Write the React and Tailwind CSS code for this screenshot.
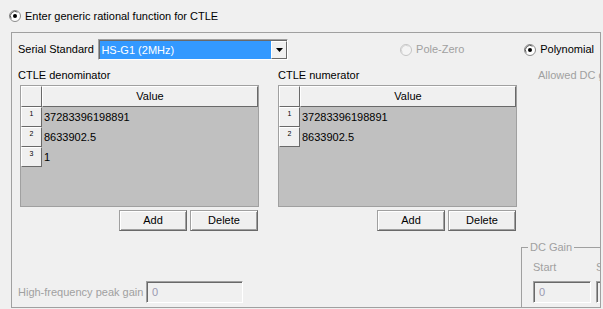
import React from 'react';

const raised = 'bg-[#f0f0f0] border border-t-white border-l-white border-r-[#696969] border-b-[#696969]';
const sunken = 'border border-t-[#a0a0a0] border-l-[#a0a0a0] border-r-white border-b-white shadow-[inset_1px_1px_0_#696969]';
const btn = 'bg-[#f0f0f0] w-[68px] h-[21px] border border-[#696969] border-t-[#a0a0a0] border-l-[#a0a0a0] shadow-[inset_1px_1px_0_#fff,inset_-1px_-1px_0_#a0a0a0]';

function Radio({ checked, disabled }) {
  return (
    <svg width="12" height="12" viewBox="0 0 12 12" className="shrink-0">
      <circle cx="6" cy="6" r="5.5" fill={disabled ? '#f4f4f4' : '#ffffff'} stroke={disabled ? '#c4c4c4' : '#8a8a8a'} />
      <path d="M2.2 8.6 A4.6 4.6 0 0 1 8.6 2.2" fill="none" stroke={disabled ? '#d4d4d4' : '#5a5a5a'} strokeWidth="1" />
      {checked && <circle cx="6" cy="6" r="2" fill="#000" />}
    </svg>
  );
}

function Grid({ title, rows, indent }) {
  return (
    <div className="flex flex-col">
      <div className="h-[13px] whitespace-nowrap">{title}</div>
      <div className={`mt-[3px] w-[239px] h-[122px] border border-[#a0a0a0] bg-[#c0c0c0] flex flex-col ${indent ? 'ml-[2px]' : ''}`}>
        <div className="flex h-[21px] shrink-0">
          <div className={`${raised} w-[21px] h-full`} />
          <div className={`${raised} flex-1 h-full flex items-center justify-center`}>Value</div>
        </div>
        {rows.map((v, i) => (
          <div key={i} className="flex h-[20px] shrink-0">
            <div className={`${raised} w-[21px] h-full flex justify-center pt-[2px] text-[7px] leading-[8px]`}>{i + 1}</div>
            <div className="flex-1 flex items-center pl-[2px]">{v}</div>
          </div>
        ))}
      </div>
      <div className="mt-[3px] flex justify-end gap-[3px] pr-[1px]">
        <button className={btn}>Add</button>
        <button className={btn}>Delete</button>
      </div>
    </div>
  );
}

function TextBox({ w, value }) {
  return (
    <div className={`${sunken} h-[22px] bg-[#f0f0f0] flex items-center pl-[5px] text-[#9a98b0]`} style={{ width: w }}>
      {value}
    </div>
  );
}

export default function App() {
  return (
    <div className="w-[603px] h-[309px] bg-[#f0f0f0] overflow-hidden font-['Liberation_Sans',Arial,sans-serif] text-[11px] leading-[13px] text-black">
      <div className="flex items-center h-[12px] mt-[10px] ml-[9px] gap-[4px]">
        <Radio checked />
        <span>Enter generic rational function for CTLE</span>
      </div>

      <div className="mt-[10px] ml-[11px] w-[590px] h-[276px] border border-[#a0a0a0] px-[6px] flex flex-col overflow-hidden">
        {/* serial standard row */}
        <div className="mt-[6px] h-[21px] flex items-center shrink-0">
          <span className="w-[81px]">Serial Standard</span>
          <div className="w-[191px] h-[21px] border border-t-[#a0a0a0] border-l-[#a0a0a0] border-r-white border-b-white bg-white flex pt-[1px] pl-[1px] shadow-[inset_1px_1px_0_#696969]">
            <div className="flex-1 bg-[#3399ff] text-white flex items-center pl-[1px]">HS-G1 (2MHz)</div>
            <div className={`${raised} w-[16px] h-full flex items-center justify-center`}>
              <svg width="7" height="4" viewBox="0 0 7 4"><path d="M0 0h7L3.5 4z" fill="#000" /></svg>
            </div>
          </div>
          <div className="ml-[112px] w-[125px] flex items-center gap-[4px] text-[#a0a0a0]">
            <Radio disabled />
            <span>Pole-Zero</span>
          </div>
          <div className="flex items-center gap-[4px]">
            <Radio checked />
            <span>Polynomial</span>
          </div>
        </div>

        {/* coefficient grids */}
        <div className="mt-[9px] flex shrink-0">
          <div className="w-[241px]">
            <Grid title="CTLE denominator" rows={['37283396198891', '8633902.5', '1']} indent />
          </div>
          <div className="ml-[19px]">
            <Grid title="CTLE numerator" rows={['37283396198891', '8633902.5']} />
          </div>
          <div className="ml-[21px] text-[#a0a0a0] whitespace-nowrap">Allowed DC gain</div>
        </div>

        <div className="flex-1" />

        {/* bottom row */}
        <div className="flex items-end shrink-0">
          <div className="flex items-center mb-[4px]">
            <span className="w-[128px] text-[#a0a0a0]">High-frequency peak gain</span>
            <TextBox w={97} value="0" />
          </div>
          <fieldset className="ml-[278px] -mb-[10px] w-[110px] min-w-0 shrink-0 border border-[#a0a0a0] px-[11px] pb-[13px]">
            <legend className="-ml-[5px] px-[2px] text-[#a0a0a0]">DC Gain</legend>
            <div className="flex gap-[5px] mt-[7px]">
              <div className="flex flex-col">
                <span className="h-[13px] text-[#a0a0a0]">Start</span>
                <div className="mt-[7px]"><TextBox w={58} value="0" /></div>
              </div>
              <div className="flex flex-col">
                <span className="h-[13px] text-[#a0a0a0]">Stop</span>
                <div className="mt-[7px]"><TextBox w={58} value="0" /></div>
              </div>
            </div>
          </fieldset>
        </div>
      </div>
    </div>
  );
}
